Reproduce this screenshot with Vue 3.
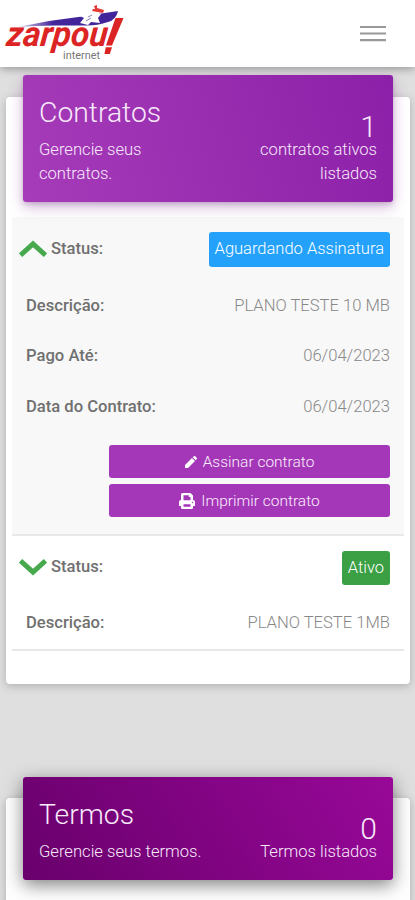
<script setup>
const contracts = [
  {
    open: true,
    status: 'Aguardando Assinatura',
    tone: 'blue',
    rows: [
      { label: 'Descrição:', value: 'PLANO TESTE 10 MB' },
      { label: 'Pago Até:', value: '06/04/2023' },
      { label: 'Data do Contrato:', value: '06/04/2023' },
    ],
  },
  {
    open: false,
    status: 'Ativo',
    tone: 'green',
    rows: [{ label: 'Descrição:', value: 'PLANO TESTE 1MB' }],
  },
]
</script>

<template>
  <div class="page">
    <header class="topbar">
      <svg class="logo" viewBox="0 0 130 64" width="130" height="64" role="img" aria-label="zarpou! internet">
        <defs>
          <linearGradient id="wake" x1="0" x2="1">
            <stop offset="0" stop-color="#42259a" stop-opacity="0.2" />
            <stop offset="0.35" stop-color="#42259a" />
          </linearGradient>
        </defs>
        <path d="M18 27 Q50 20 82 16.5 L98 14 L118 11 Q116 20 108 22 Q98 25.5 86 25.5 L64 25.5 Q40 25 18 27Z" fill="url(#wake)" />
        <path d="M78 8 L83 9 L87 12 L90 9 L94 10 L94 13 L101 14 L98 18 L100 23 L91 22 L88 25 L80 23 L84 18 L78 15 L84 14Z" fill="#fff" />
        <path d="M88 17 L92 15 M86 21 L91 18" stroke="#8b7fbd" stroke-width="1" />
        <path d="M94 6 L97 5 L97 8 L104 10 L103 13 L92 11 L93 9 L95 9Z" fill="#e43b36" />
        <text class="brand" x="5.5" y="46" textLength="101" lengthAdjust="spacingAndGlyphs" transform="translate(5 0) skewX(-6)">zarpou</text>
        <path d="M115.5 18 L123.5 18 L112 45.5 L106 45.5Z" fill="#dd2424" />
        <path d="M105.8 47.3 H112 L109.8 54 H104.4Z" fill="#dd2424" />
        <text class="sub" x="63" y="59" textLength="37" lengthAdjust="spacingAndGlyphs">internet</text>
      </svg>
      <svg class="menu" viewBox="0 0 26 18" width="26" height="18">
        <path d="M0 2H26M0 8.5H26M0 15.2H26" stroke="#999" stroke-width="2.2" />
      </svg>
    </header>

    <main>
      <section class="card contracts">
        <div class="panel violet">
          <div class="intro">
            <h2>Contratos</h2>
            <p>Gerencie seus<br />contratos.</p>
          </div>
          <div class="total">
            <strong>1</strong>
            <p>contratos ativos<br />listados</p>
          </div>
        </div>

        <article v-for="c in contracts" :key="c.status" class="contract" :class="{ open: c.open }">
          <div class="status">
            <svg class="chevron" :class="{ down: !c.open }" viewBox="0 0 28 18" width="28" height="18">
              <path d="M1.5 15.2 L14 3.8 L26.5 15.2" fill="none" stroke="#46a94d" stroke-width="5" />
            </svg>
            <b>Status:</b>
            <span class="badge" :class="c.tone">{{ c.status }}</span>
          </div>
          <div v-for="r in c.rows" :key="r.label" class="row">
            <b>{{ r.label }}</b>
            <span>{{ r.value }}</span>
          </div>
          <div v-if="c.open" class="actions">
            <button type="button">
              <svg class="pencil" viewBox="0 0 12 12" width="12" height="12">
                <path d="M0 9 L7 2 L10 5 L3 12 H0Z M7.7 1.3 L8.9.3 Q9.6-.2 10.2.3 L11.7 1.8 Q12.2 2.4 11.7 3.1 L10.7 4.3Z" fill="#fff" />
              </svg>
              <span class="sign">Assinar contrato</span>
            </button>
            <button type="button">
              <svg class="printer" viewBox="0 0 16 16" width="16" height="16">
                <path fill-rule="evenodd" d="M2 7V1.5Q2 0 3.5 0H11.5L14 2.5V7Q16 7 16 9V13H14V14.7Q14 16 12.7 16H3.3Q2 16 2 14.7V13H0V9Q0 7 2 7ZM4.5 2.3V7.3H11.5V4H9.8V2.3ZM4.5 11.3V13.7H11.5V11.3Z" fill="#fff" />
                <circle cx="13.5" cy="9.5" r=".7" fill="#a337b8" />
              </svg>
              <span class="print">Imprimir contrato</span>
            </button>
          </div>
        </article>
      </section>

      <section class="card terms">
        <div class="panel plum">
          <div class="intro">
            <h2>Termos</h2>
            <p>Gerencie seus termos.</p>
          </div>
          <div class="total">
            <strong>0</strong>
            <p>Termos listados</p>
          </div>
        </div>
      </section>
    </main>
  </div>
</template>

<style>
body {
  background: #e0e0e0;
}
</style>

<style scoped>
* {
  box-sizing: border-box;
}
.page {
  height: 900px;
  overflow: hidden;
  background: #dfdfdf;
  font-family: Roboto, 'Liberation Sans', sans-serif;
  font-size: 16.6px;
  font-weight: 300;
}
.topbar {
  position: relative;
  display: flex;
  justify-content: space-between;
  align-items: flex-start;
  height: 67px;
  padding-right: 29px;
  background: #fff;
  box-shadow: 0 2px 8px rgba(0, 0, 0, 0.32);
}
.logo {
  display: block;
}
.menu {
  margin-top: 25px;
}
.brand {
  font: italic 700 35px Roboto, sans-serif;
  fill: #dd2424;
}
.sub {
  font: 400 10px Roboto, sans-serif;
  fill: #777;
}
main {
  padding: 30px 5px 0 6px;
}
.card {
  background: #fff;
  border-radius: 4px;
  box-shadow: 0 2px 10px rgba(0, 0, 0, 0.22);
}
.contracts {
  height: 587px;
  padding: 0 6px;
}
.terms {
  height: 180px;
  margin-top: 114px;
  padding: 0 6px;
}
.panel {
  position: relative;
  display: flex;
  justify-content: space-between;
  margin: 0 11px;
  padding: 0 16px;
  border-radius: 3px;
  color: #f8e9fb;
  line-height: 23.5px;
}
.violet {
  top: -22px;
  height: 127px;
  margin-bottom: -7px;
  background: linear-gradient(75deg, #a63cb9, #8c20a8);
  box-shadow: 0 5px 14px rgba(130, 40, 150, 0.35), 0 2px 4px rgba(0, 0, 0, 0.15);
}
.plum {
  top: -21px;
  height: 103px;
  background: linear-gradient(60deg, #69006c, #980898);
  box-shadow: 0 5px 18px rgba(0, 0, 0, 0.5);
}
h2 {
  margin: 20px 0 7px;
  font-size: 28.3px;
  font-weight: 300;
  line-height: 36px;
}
p {
  margin: 0;
}
.total {
  text-align: right;
}
.total strong {
  display: block;
  height: 26px;
  margin-top: 37px;
  font-size: 30px;
  font-weight: 300;
  line-height: 29px;
}
.contract {
  height: 115px;
  padding: 14px 14px 0;
  border-bottom: 2px solid #e8e8e8;
}
.contract.open {
  height: 319px;
  padding-top: 15px;
  background: #f8f8f8;
}
.status {
  display: flex;
  align-items: center;
  height: 35px;
  margin: 0 0 12px -7px;
}
.chevron {
  margin-top: -2px;
  margin-right: 4px;
}
.down {
  transform: rotate(180deg);
}
b {
  color: #707070;
  font-weight: 500;
}
.status b {
  margin-top: -2px;
}
.badge {
  margin-left: auto;
  height: 35px;
  padding: 0 6px;
  border-radius: 3px;
  color: #fff;
  font-size: 16.5px;
  line-height: 33px;
}
.blue {
  background: #24a1fb;
}
.green {
  height: 34px;
  background: #3aa043;
}
.row {
  display: flex;
  justify-content: space-between;
  align-items: center;
  height: 50.5px;
  padding-top: 1px;
}
.open .row {
  padding-top: 2px;
}
.row span {
  color: #888;
}
.actions {
  display: flex;
  flex-direction: column;
  gap: 6px;
  margin: 14px 0 0 83px;
}
button {
  display: flex;
  justify-content: center;
  align-items: center;
  gap: 6px;
  width: 100%;
  height: 33px;
  padding: 1px 0 0;
  border: 0;
  border-radius: 3px;
  background: #a337b8;
  color: #fbeefd;
  font: inherit;
  font-size: 15.5px;
}
</style>
